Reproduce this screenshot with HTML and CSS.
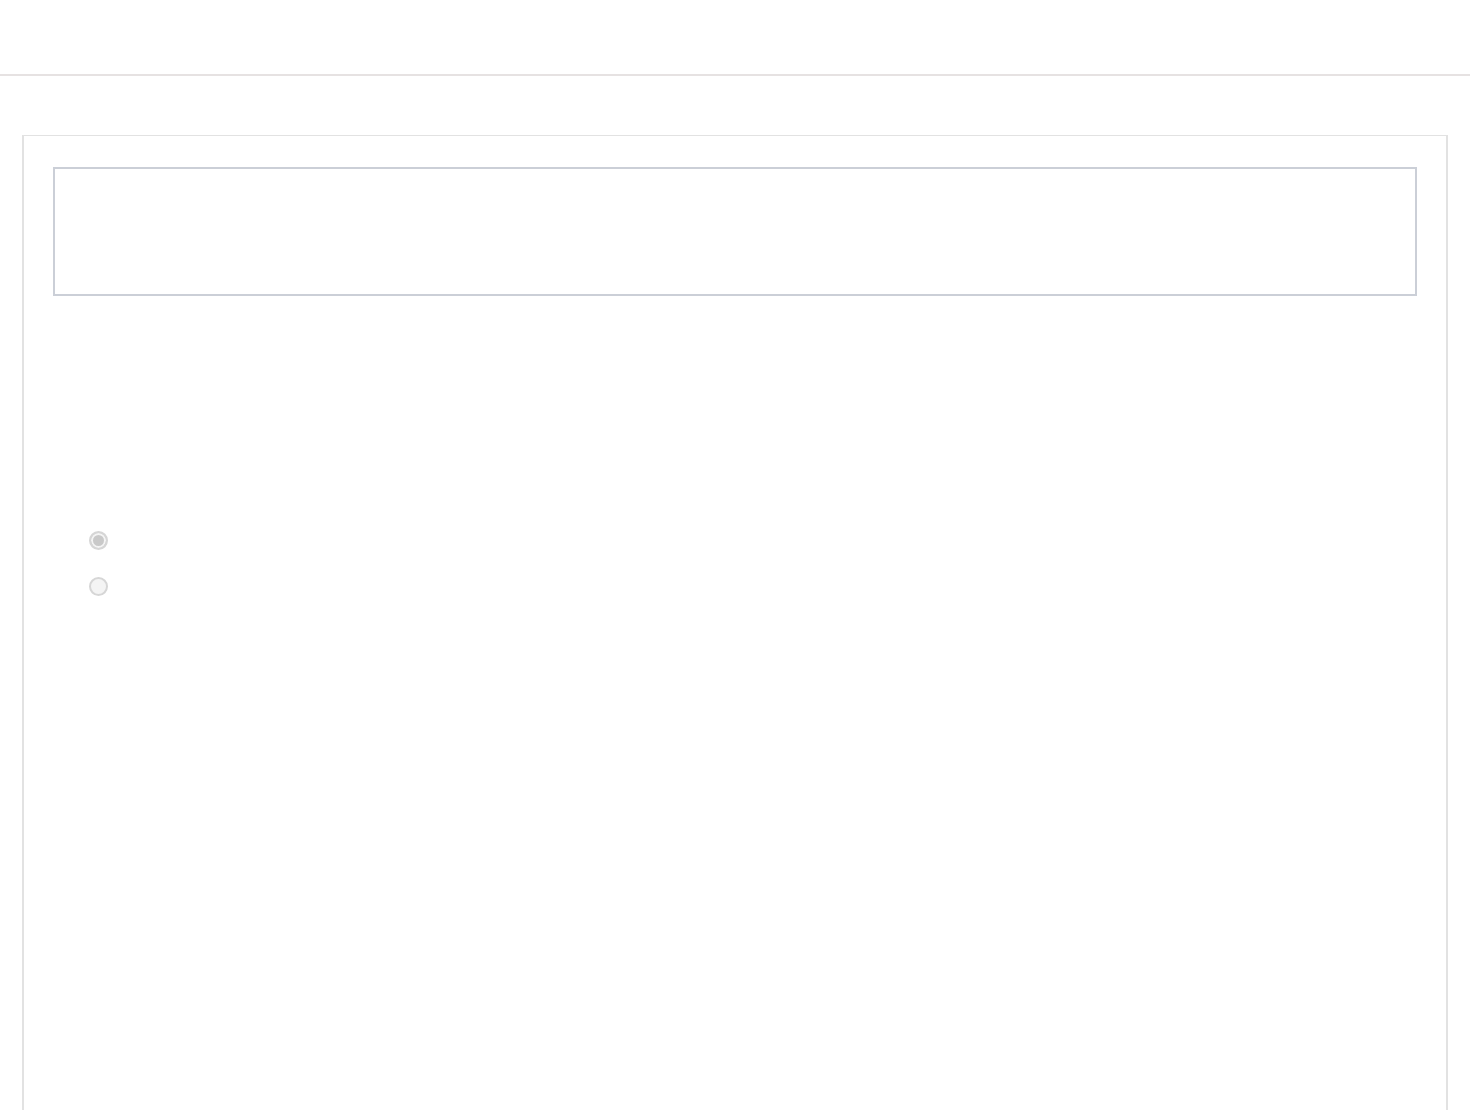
FILE: index.html
```html
<!DOCTYPE html>
<html lang="en">
<head>
    <meta charset="UTF-8">
    <meta name="viewport" content="width=device-width, initial-scale=1.0">
    <title>Options</title>
    <link rel="stylesheet" href="styles.css">
</head>
<body>
    <header class="topbar"></header>

    <main class="panel">
        <div class="notice"></div>

        <form class="choices">
            <label class="choice">
                <input type="radio" name="mode" value="a" checked disabled>
            </label>
            <label class="choice">
                <input type="radio" name="mode" value="b" disabled>
            </label>
        </form>
    </main>
</body>
</html>
```

FILE: styles.css
```css
body {
    font-family: 'Liberation Sans', Arial, sans-serif;
    background-color: #fff;
    margin: 0;
    padding: 0;
}

.topbar {
    height: 74px;
    border-bottom: 2px solid #e6e2e2;
}

.panel {
    margin: 59px 22px 0;
    padding: 31px 29px 0;
    min-height: 1000px;
    border: 1px solid #e2e2e2;
    border-left-width: 2px;
    border-right-width: 2px;
    border-bottom: none;
}

.notice {
    height: 125px;
    border: 2px solid #cbcfd7;
}

.choices {
    display: flex;
    flex-direction: column;
    gap: 27px;
    margin-top: 235px;
    padding-left: 36px;
}

.choice {
    display: flex;
    align-items: center;
    height: 19px;
}

input[type="radio"] {
    appearance: none;
    -webkit-appearance: none;
    margin: 0;
    width: 19px;
    height: 19px;
    border-radius: 50%;
    border: 2px solid #d6d6d6;
    background-color: #f4f4f4;
    box-sizing: border-box;
}

input[type="radio"]:checked {
    background-color: #c9c9c9;
    box-shadow: inset 0 0 0 2px #f4f4f4;
}
```
